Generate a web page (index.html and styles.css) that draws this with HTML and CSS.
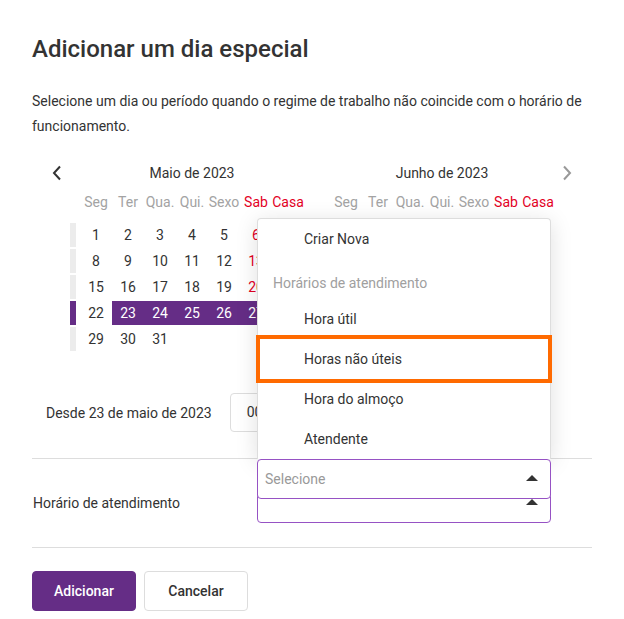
FILE: index.html
```html
<!DOCTYPE html>
<html lang="pt">
<head>
    <meta charset="UTF-8">
    <meta name="viewport" content="width=device-width, initial-scale=1.0">
    <title>Adicionar um dia especial</title>
    <link rel="stylesheet" href="styles.css">
</head>
<body>
    <div class="dialog">
        <h1>Adicionar um dia especial</h1>
        <p class="intro">Selecione um dia ou período quando o regime de trabalho não coincide com o horário de funcionamento.</p>

        <div class="calendar">
            <button class="nav-btn" type="button" aria-label="Anterior">
                <svg width="10" height="16" viewBox="0 0 10 16"><path d="M8 1.5 L2 8 L8 14.5" fill="none" stroke="#333" stroke-width="2"/></svg>
            </button>

            <div class="month">
                <div class="month-title">Maio de 2023</div>
                <div class="weekdays">
                    <span>Seg</span><span>Ter</span><span>Qua.</span><span>Qui.</span><span>Sexo</span><span class="we">Sab</span><span class="we">Casa</span>
                </div>
                <div class="week"><i class="wk"></i><span>1</span><span>2</span><span>3</span><span>4</span><span>5</span><span class="we">6</span><span class="we">7</span></div>
                <div class="week"><i class="wk"></i><span>8</span><span>9</span><span>10</span><span>11</span><span>12</span><span class="we">13</span><span class="we">14</span></div>
                <div class="week"><i class="wk"></i><span>15</span><span>16</span><span>17</span><span>18</span><span>19</span><span class="we">20</span><span class="we">21</span></div>
                <div class="week"><i class="wk active"></i><span>22</span><span class="sel">23</span><span class="sel">24</span><span class="sel">25</span><span class="sel">26</span><span class="sel">27</span><span class="sel">28</span></div>
                <div class="week"><i class="wk"></i><span>29</span><span>30</span><span>31</span><span></span><span></span><span></span><span></span></div>
            </div>

            <div class="month">
                <div class="month-title">Junho de 2023</div>
                <div class="weekdays">
                    <span>Seg</span><span>Ter</span><span>Qua.</span><span>Qui.</span><span>Sexo</span><span class="we">Sab</span><span class="we">Casa</span>
                </div>
                <div class="week"><i class="wk"></i><span></span><span></span><span></span><span>1</span><span>2</span><span class="we">3</span><span class="we">4</span></div>
                <div class="week"><i class="wk"></i><span>5</span><span>6</span><span>7</span><span>8</span><span>9</span><span class="we">10</span><span class="we">11</span></div>
                <div class="week"><i class="wk"></i><span>12</span><span>13</span><span>14</span><span>15</span><span>16</span><span class="we">17</span><span class="we">18</span></div>
                <div class="week"><i class="wk"></i><span>19</span><span>20</span><span>21</span><span>22</span><span>23</span><span class="we">24</span><span class="we">25</span></div>
                <div class="week"><i class="wk"></i><span>26</span><span>27</span><span>28</span><span>29</span><span>30</span><span></span><span></span></div>
            </div>

            <button class="nav-btn next" type="button" aria-label="Próximo">
                <svg width="10" height="16" viewBox="0 0 10 16"><path d="M2 1.5 L8 8 L2 14.5" fill="none" stroke="#999" stroke-width="2"/></svg>
            </button>
        </div>

        <div class="since-row">
            <span>Desde 23 de maio de 2023</span>
            <div class="time-input">00:00</div>
        </div>

        <div class="form-row">
            <label>Horário de atendimento</label>
            <div class="select-wrap">
                <div class="select-field"><span class="caret"></span></div>

                <!-- menu aberto -->
                <div class="popup">
                    <ul class="menu">
                        <li class="item">Criar Nova</li>
                        <li class="group">Horários de atendimento</li>
                        <li class="item">Hora útil</li>
                        <li class="item marked">Horas não úteis</li>
                        <li class="item">Hora do almoço</li>
                        <li class="item">Atendente</li>
                    </ul>
                    <div class="select-field open">
                        <span class="placeholder">Selecione</span>
                        <span class="caret"></span>
                    </div>
                </div>
            </div>
        </div>

        <div class="actions">
            <button class="btn primary" type="button">Adicionar</button>
            <button class="btn" type="button">Cancelar</button>
        </div>
    </div>
</body>
</html>
```

FILE: styles.css
```css
body {
    margin: 0;
    font-family: Roboto, 'Liberation Sans', Arial, sans-serif;
    color: #333;
    background: #fff;
}
.dialog {
    padding: 34px 32px 0;
}
.dialog h1 {
    margin: 0 0 25px;
    font-size: 24px;
    line-height: 30px;
    font-weight: 500;
}
.intro {
    margin: 0;
    font-size: 14px;
    line-height: 25px;
}

/* Calendario */
.calendar {
    display: flex;
    align-items: flex-start;
    margin: 24px 0 0 15px;
}
.nav-btn {
    width: 20px;
    height: 20px;
    padding: 0;
    margin-right: 3px;
    border: none;
    background: none;
    display: flex;
    align-items: center;
    justify-content: center;
    cursor: pointer;
}
.nav-btn.next {
    margin: 0 0 0 3px;
}
.month {
    width: 234px;
    font-size: 14px;
}
.month + .month {
    margin-left: 16px;
}
.month-title {
    height: 20px;
    line-height: 20px;
    padding-left: 10px;
    text-align: center;
}
.weekdays {
    display: flex;
    padding-left: 10px;
    margin: 9px 0 11px;
    line-height: 20px;
    color: #a3a3a3;
}
.weekdays span,
.week span {
    width: 32px;
    text-align: center;
}
.weekdays .we {
    color: #e3001f;
}
.week {
    display: flex;
    height: 24px;
    line-height: 24px;
    margin-bottom: 2px;
}
.week .wk {
    width: 6px;
    margin-right: 4px;
    background: #ececec;
}
.week .wk.active {
    background: #652d86;
}
.week .we {
    color: #e3001f;
}
.week .sel {
    background: #652d86;
    color: #fff;
}

/* Linha "Desde" */
.since-row {
    display: flex;
    align-items: center;
    gap: 18px;
    margin-top: 40px;
    padding-left: 14px;
    font-size: 14px;
}
.time-input {
    width: 90px;
    height: 37px;
    line-height: 37px;
    padding-left: 16px;
    border: 1px solid #ddd;
    border-radius: 4px;
}

/* Campo de selecao */
.form-row {
    display: flex;
    align-items: center;
    margin-top: 26px;
    padding: 24px 0;
    border-top: 1px solid #ddd;
    border-bottom: 1px solid #ddd;
    font-size: 14px;
}
.form-row label {
    width: 224px;
    padding-left: 1px;
}
.select-wrap {
    position: relative;
    width: 294px;
}
.select-field {
    position: relative;
    height: 38px;
    border: 1px solid #9652c4;
    border-radius: 4px;
    background: #fff;
}
.caret {
    position: absolute;
    right: 12px;
    top: 15px;
    width: 0;
    height: 0;
    border-left: 6px solid transparent;
    border-right: 6px solid transparent;
    border-bottom: 6px solid #333;
}
.placeholder {
    display: block;
    padding-left: 7px;
    line-height: 38px;
    color: #999;
}
.popup {
    position: absolute;
    left: 0;
    right: 0;
    bottom: 24px;
    z-index: 5;
}
.menu {
    list-style: none;
    margin: 0;
    padding: 0;
    background: #fff;
    border: 1px solid #ddd;
    border-bottom: none;
    border-radius: 4px 4px 0 0;
    box-shadow: 0 4px 22px rgba(0, 0, 0, 0.13);
}
.menu li {
    height: 40px;
    line-height: 40px;
}
.menu .item {
    padding-left: 46px;
}
.menu .group {
    height: 26px;
    line-height: 20px;
    padding: 14px 0 0 15px;
    color: #a0a0a0;
}
.menu .marked {
    position: relative;
}
.menu .marked::after {
    content: "";
    position: absolute;
    left: -2px;
    right: -2px;
    top: -4px;
    bottom: -4px;
    border: 4px solid #ff6a00;
}

/* Botones */
.actions {
    display: flex;
    gap: 8px;
    margin-top: 23px;
}
.btn {
    width: 104px;
    height: 40px;
    font-family: inherit;
    font-size: 14px;
    font-weight: 500;
    color: #333;
    background: #fff;
    border: 1px solid #ddd;
    border-radius: 4px;
    cursor: pointer;
}
.btn.primary {
    background: #652d86;
    border-color: #652d86;
    color: #fff;
}
```
